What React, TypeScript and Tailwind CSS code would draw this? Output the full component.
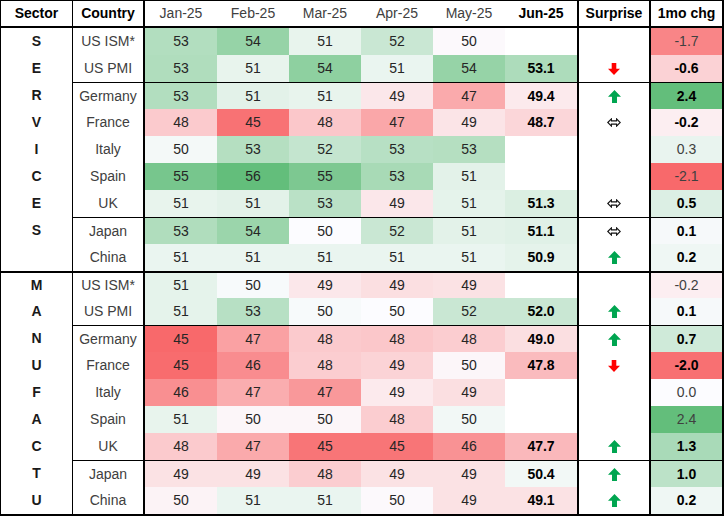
import React from 'react'

type Surprise = 'up' | 'down' | 'flat' | null

type Row = {
    letter: string
    country: string
    months: number[]
    jun: number | null
    surprise: Surprise
    chg: string
    group?: boolean
    section?: boolean
}

const rows: Row[] = [
    { letter: 'S', country: 'US ISM*', months: [52.9, 54.0, 50.8, 52.0, 49.9], jun: null, surprise: null, chg: '-1.7' },
    { letter: 'E', country: 'US PMI', months: [53.0, 50.8, 54.3, 50.7, 54.0], jun: 53.1, surprise: 'down', chg: '-0.6' },
    { letter: 'R', country: 'Germany', months: [52.9, 51.0, 50.8, 49.3, 47.2], jun: 49.4, surprise: 'up', chg: '2.4', group: true },
    { letter: 'V', country: 'France', months: [48.3, 45.3, 48.2, 47.1, 49.2], jun: 48.7, surprise: 'flat', chg: '-0.2' },
    { letter: 'I', country: 'Italy', months: [50.3, 52.8, 52.2, 52.7, 52.8], jun: null, surprise: null, chg: '0.3' },
    { letter: 'C', country: 'Spain', months: [55.2, 56.0, 55.0, 53.3, 51.0], jun: null, surprise: null, chg: '-2.1' },
    { letter: 'E', country: 'UK', months: [50.8, 51.0, 52.6, 49.3, 50.9], jun: 51.3, surprise: 'flat', chg: '0.5' },
    { letter: 'S', country: 'Japan', months: [53.0, 53.8, 50.0, 52.0, 51.0], jun: 51.1, surprise: 'flat', chg: '0.1', group: true },
    { letter: '', country: 'China', months: [50.7, 50.7, 50.7, 50.7, 50.7], jun: 50.9, surprise: 'up', chg: '0.2' },
    { letter: 'M', country: 'US ISM*', months: [50.9, 50.2, 49.3, 49.0, 49.1], jun: null, surprise: null, chg: '-0.2', section: true },
    { letter: 'A', country: 'US PMI', months: [50.9, 52.7, 50.2, 50.0, 52.0], jun: 52.0, surprise: 'up', chg: '0.1' },
    { letter: 'N', country: 'Germany', months: [45.0, 46.9, 48.3, 48.2, 48.4], jun: 49.0, surprise: 'up', chg: '0.7', group: true },
    { letter: 'U', country: 'France', months: [45.1, 46.2, 48.4, 48.6, 49.8], jun: 47.8, surprise: 'down', chg: '-2.0' },
    { letter: 'F', country: 'Italy', months: [46.3, 47.3, 46.6, 49.4, 49.0], jun: null, surprise: null, chg: '0.0' },
    { letter: 'A', country: 'Spain', months: [50.8, 49.8, 49.8, 48.4, 50.4], jun: null, surprise: null, chg: '2.4' },
    { letter: 'C', country: 'UK', months: [48.3, 47.2, 45.4, 45.4, 46.4], jun: 47.7, surprise: 'up', chg: '1.3' },
    { letter: 'T', country: 'Japan', months: [49.1, 49.1, 48.4, 49.1, 49.1], jun: 50.4, surprise: 'up', chg: '1.0', group: true },
    { letter: 'U', country: 'China', months: [49.7, 50.7, 50.7, 49.9, 49.1], jun: 49.1, surprise: 'up', chg: '0.2' },
]

const white = [252, 252, 255]
const green = [99, 190, 123]
const red = [248, 105, 107]

const mix = (to: number[], t: number) => {
    const k = Math.max(0, Math.min(1, t))
    const c = white.map((w, i) => Math.round(w + (to[i] - w) * k))
    return `rgb(${c[0]}, ${c[1]}, ${c[2]})`
}

const heat = (v: number) => (v >= 50 ? mix(green, (v - 50) / 6) : mix(red, (50 - v) / 5))
const chgHeat = (v: number) => (v >= 0 ? mix(green, v / 2.4) : mix(red, -v / 2.1))

const UpArrow = () => (
    <svg width="13" height="13" viewBox="0 0 12 12">
        <path d="M6 0 L12 6.2 L8.3 6.2 L8.3 12 L3.7 12 L3.7 6.2 L0 6.2 Z" fill="#00a550" />
    </svg>
)

const DownArrow = () => (
    <svg width="12" height="12" viewBox="0 0 12 12">
        <path d="M3.7 0 L8.3 0 L8.3 5.8 L12 5.8 L6 12 L0 5.8 L3.7 5.8 Z" fill="#ff0000" />
    </svg>
)

const FlatArrow = () => (
    <svg width="14" height="9" viewBox="0 0 14 9">
        <path
            d="M0.8 4.5 L4.4 0.9 L4.4 2.9 L9.6 2.9 L9.6 0.9 L13.2 4.5 L9.6 8.1 L9.6 6.1 L4.4 6.1 L4.4 8.1 Z"
            fill="none"
            stroke="#111"
            strokeWidth="1.1"
        />
    </svg>
)

const months = ['Jan-25', 'Feb-25', 'Mar-25', 'Apr-25', 'May-25']

const App = () => {
    return (
        <div className="w-[725px] h-[517px] bg-white font-['Liberation_Sans',Arial,sans-serif] text-[14px]">
            <div className="w-[724px] border-t border-l border-r-2 border-b-2 border-black">
                <div className="flex h-[27px] border-b-2 border-black">
                    <div className="w-[72px] border-r border-black flex items-center justify-center font-bold text-black">Sector</div>
                    <div className="w-[72px] border-r-2 border-black flex items-center justify-center font-bold text-black">Country</div>
                    {months.map((m) => (
                        <div key={m} className="w-[72px] flex items-center justify-center text-[#404040]">{m}</div>
                    ))}
                    <div className="w-[72px] flex items-center justify-center font-bold text-black">Jun-25</div>
                    <div className="w-[72px] border-l-2 border-black flex items-center justify-center font-bold text-black">Surprise</div>
                    <div className="w-[73px] border-l-2 border-black flex items-center justify-center font-bold text-black">1mo chg</div>
                </div>
                {rows.map((r, i) => {
                    const line = r.section ? 'border-t-2 border-t-black' : r.group ? 'border-t border-t-black' : ''
                    const chg = parseFloat(r.chg)
                    return (
                        <div key={i} className="flex h-[27px]">
                            <div className={`w-[72px] border-r border-black flex items-center justify-center font-bold text-[#1a1a1a] ${r.section ? 'border-t-2 border-t-black' : ''}`}>
                                {r.letter}
                            </div>
                            <div className={`w-[72px] border-r-2 border-black flex items-center justify-center text-[#404040] ${line}`}>
                                {r.country}
                            </div>
                            {r.months.map((v, j) => (
                                <div
                                    key={j}
                                    className={`w-[72px] flex items-center justify-center text-[#262626] ${line}`}
                                    style={{ backgroundColor: heat(v) }}
                                >
                                    {Math.round(v)}
                                </div>
                            ))}
                            <div
                                className={`w-[72px] flex items-center justify-center font-bold text-black ${line}`}
                                style={{ backgroundColor: r.jun === null ? '#ffffff' : heat(r.jun) }}
                            >
                                {r.jun === null ? '' : r.jun.toFixed(1)}
                            </div>
                            <div className={`w-[72px] border-l-2 border-black flex items-center justify-center ${line}`}>
                                {r.surprise === 'up' && <UpArrow />}
                                {r.surprise === 'down' && <DownArrow />}
                                {r.surprise === 'flat' && <FlatArrow />}
                            </div>
                            <div
                                className={`w-[73px] border-l-2 border-black flex items-center justify-center ${r.jun === null ? 'text-[#404040]' : 'font-bold text-black'} ${line}`}
                                style={{ backgroundColor: chgHeat(chg) }}
                            >
                                {r.chg}
                            </div>
                        </div>
                    )
                })}
            </div>
        </div>
    )
}

export default App
